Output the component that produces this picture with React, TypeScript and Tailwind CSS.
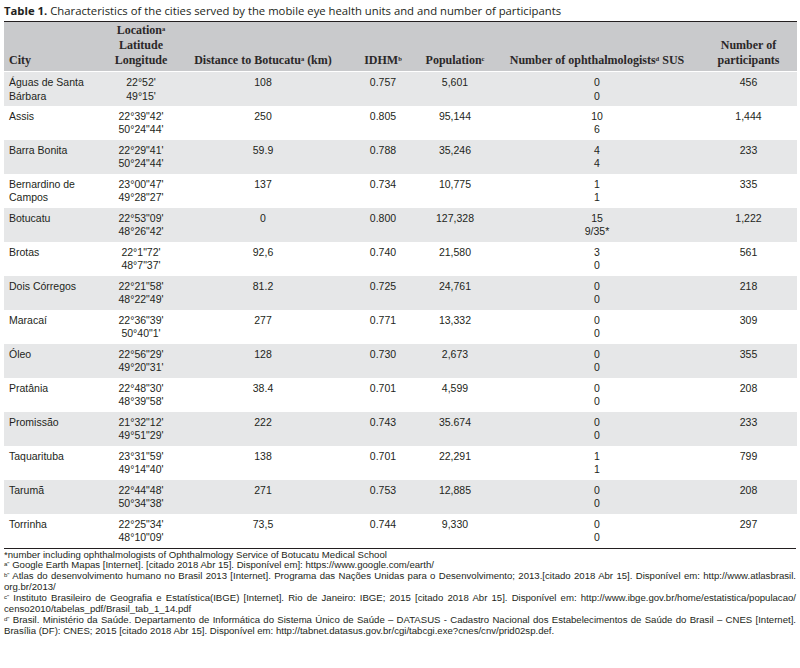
const rows = [
  [["Águas de Santa", "Bárbara"], "22°52'", "49°15'", "108", "0.757", "5,601", "0", "0", "456"],
  [["Assis"], "22°39\"42'", "50°24\"44'", "250", "0.805", "95,144", "10", "6", "1,444"],
  [["Barra Bonita"], "22°29\"41'", "50°24\"44'", "59.9", "0.788", "35,246", "4", "4", "233"],
  [["Bernardino de", "Campos"], "23°00\"47'", "49°28\"27'", "137", "0.734", "10,775", "1", "1", "335"],
  [["Botucatu"], "22°53\"09'", "48°26\"42'", "0", "0.800", "127,328", "15", "9/35*", "1,222"],
  [["Brotas"], "22°1\"72'", "48°7\"37'", "92,6", "0.740", "21,580", "3", "0", "561"],
  [["Dois Córregos"], "22°21\"58'", "48°22\"49'", "81.2", "0.725", "24,761", "0", "0", "218"],
  [["Maracaí"], "22°36\"39'", "50°40\"1'", "277", "0.771", "13,332", "0", "0", "309"],
  [["Óleo"], "22°56\"29'", "49°20\"31'", "128", "0.730", "2,673", "0", "0", "355"],
  [["Pratânia"], "22°48\"30'", "48°39\"58'", "38.4", "0.701", "4,599", "0", "0", "208"],
  [["Promissão"], "21°32\"12'", "49°51\"29'", "222", "0.743", "35.674", "0", "0", "233"],
  [["Taquarituba"], "23°31\"59'", "49°14\"40'", "138", "0.701", "22,291", "1", "1", "799"],
  [["Tarumã"], "22°44\"48'", "50°34\"38'", "271", "0.753", "12,885", "0", "0", "208"],
  [["Torrinha"], "22°25\"34'", "48°10\"09'", "73,5", "0.744", "9,330", "0", "0", "297"],
] as const;

function Sup({ children }: { children: React.ReactNode }) {
  return <span className="text-[6.5px] leading-none align-[3px]">{children}</span>;
}

function NoteMark({ children }: { children: React.ReactNode }) {
  return <span className="text-[6px] leading-none align-[2px]">{children}</span>;
}

export default function App() {
  return (
    <div className="w-[800px] h-[668px] bg-white text-[#231f20] px-[4px] pt-[4px] overflow-hidden" style={{ fontFamily: "'Liberation Sans', Arial, sans-serif" }}>
      <p className="text-[11.3px] leading-[14px] mb-[3px]" style={{ fontFamily: "'Open Sans', sans-serif" }}>
        <span className="font-bold">Table 1.</span> Characteristics of the cities served by the mobile eye health units and and number of participants
      </p>

      <table className="w-[793px] table-fixed border-collapse">
        <colgroup>
          <col className="w-[102px]" />
          <col className="w-[70px]" />
          <col className="w-[174px]" />
          <col className="w-[66px]" />
          <col className="w-[78px]" />
          <col className="w-[206px]" />
          <col className="w-[97px]" />
        </colgroup>
        <thead>
          <tr className="bg-[#c9cacc] border-t border-t-[#231f20] border-b border-b-white h-[50px] text-[12px] leading-[15px] font-bold align-bottom text-[#2b2829]" style={{ fontFamily: "'Liberation Serif', serif" }}>
            <th className="text-left pl-[5px] pb-[3px] font-bold">City</th>
            <th className="text-center pb-[3px] font-bold whitespace-nowrap">
              Location<Sup>a</Sup>
              <br />
              Latitude
              <br />
              Longitude
            </th>
            <th className="text-center pb-[3px] font-bold">
              Distance to Botucatu<Sup>a</Sup> (km)
            </th>
            <th className="text-center pb-[3px] font-bold">
              IDHM<Sup>b</Sup>
            </th>
            <th className="text-center pb-[3px] font-bold">
              Population<Sup>c</Sup>
            </th>
            <th className="text-center pb-[3px] font-bold">
              Number of ophthalmologists<Sup>d</Sup> SUS
            </th>
            <th className="text-center pb-[3px] font-bold">
              Number of
              <br />
              participants
            </th>
          </tr>
        </thead>
        <tbody className="text-[10.5px] leading-[13.5px]">
          {rows.map((r, i) => (
            <tr key={r[0][0]} className={`h-[34px] align-top ${i % 2 === 0 ? "bg-[#e6e7e8]" : "bg-white"}`}>
              <td className="pl-[5px] pt-[4px] whitespace-nowrap">
                {r[0].map((line, j) => (
                  <div key={j}>{line}</div>
                ))}
              </td>
              <td className="text-center pt-[4px]">
                {r[1]}
                <br />
                {r[2]}
              </td>
              <td className="text-center pt-[4px]">{r[3]}</td>
              <td className="text-center pt-[4px]">{r[4]}</td>
              <td className="text-center pt-[4px]">{r[5]}</td>
              <td className="text-center pt-[4px]">
                {r[6]}
                <br />
                {r[7]}
              </td>
              <td className="text-center pt-[4px]">{r[8]}</td>
            </tr>
          ))}
        </tbody>
      </table>

      <div className="border-t border-[#231f20] pt-[1px] text-[9.6px] leading-[10.9px] text-justify">
        <p>*number including ophthalmologists of Ophthalmology Service of Botucatu Medical School</p>
        <p>
          <NoteMark>a"</NoteMark> Google Earth Mapas [Internet]. [citado 2018 Abr 15]. Disponível em]: https://www.google.com/earth/
        </p>
        <p>
          <NoteMark>b"</NoteMark> Atlas do desenvolvimento humano no Brasil 2013 [Internet]. Programa das Nações Unidas para o Desenvolvimento; 2013.[citado 2018 Abr 15]. Disponível em: http://www.atlasbrasil. org.br/2013/
        </p>
        <p>
          <NoteMark>c"</NoteMark> Instituto Brasileiro de Geografia e Estatística(IBGE) [Internet]. Rio de Janeiro: IBGE; 2015 [citado 2018 Abr 15]. Disponível em: http://www.ibge.gov.br/home/estatistica/populacao/ censo2010/tabelas_pdf/Brasil_tab_1_14.pdf
        </p>
        <p>
          <NoteMark>d"</NoteMark> Brasil. Ministério da Saúde. Departamento de Informática do Sistema Único de Saúde – DATASUS - Cadastro Nacional dos Estabelecimentos de Saúde do Brasil – CNES [Internet]. Brasília (DF): CNES; 2015 [citado 2018 Abr 15]. Disponível em: http://tabnet.datasus.gov.br/cgi/tabcgi.exe?cnes/cnv/prid02sp.def.
        </p>
      </div>
    </div>
  );
}
